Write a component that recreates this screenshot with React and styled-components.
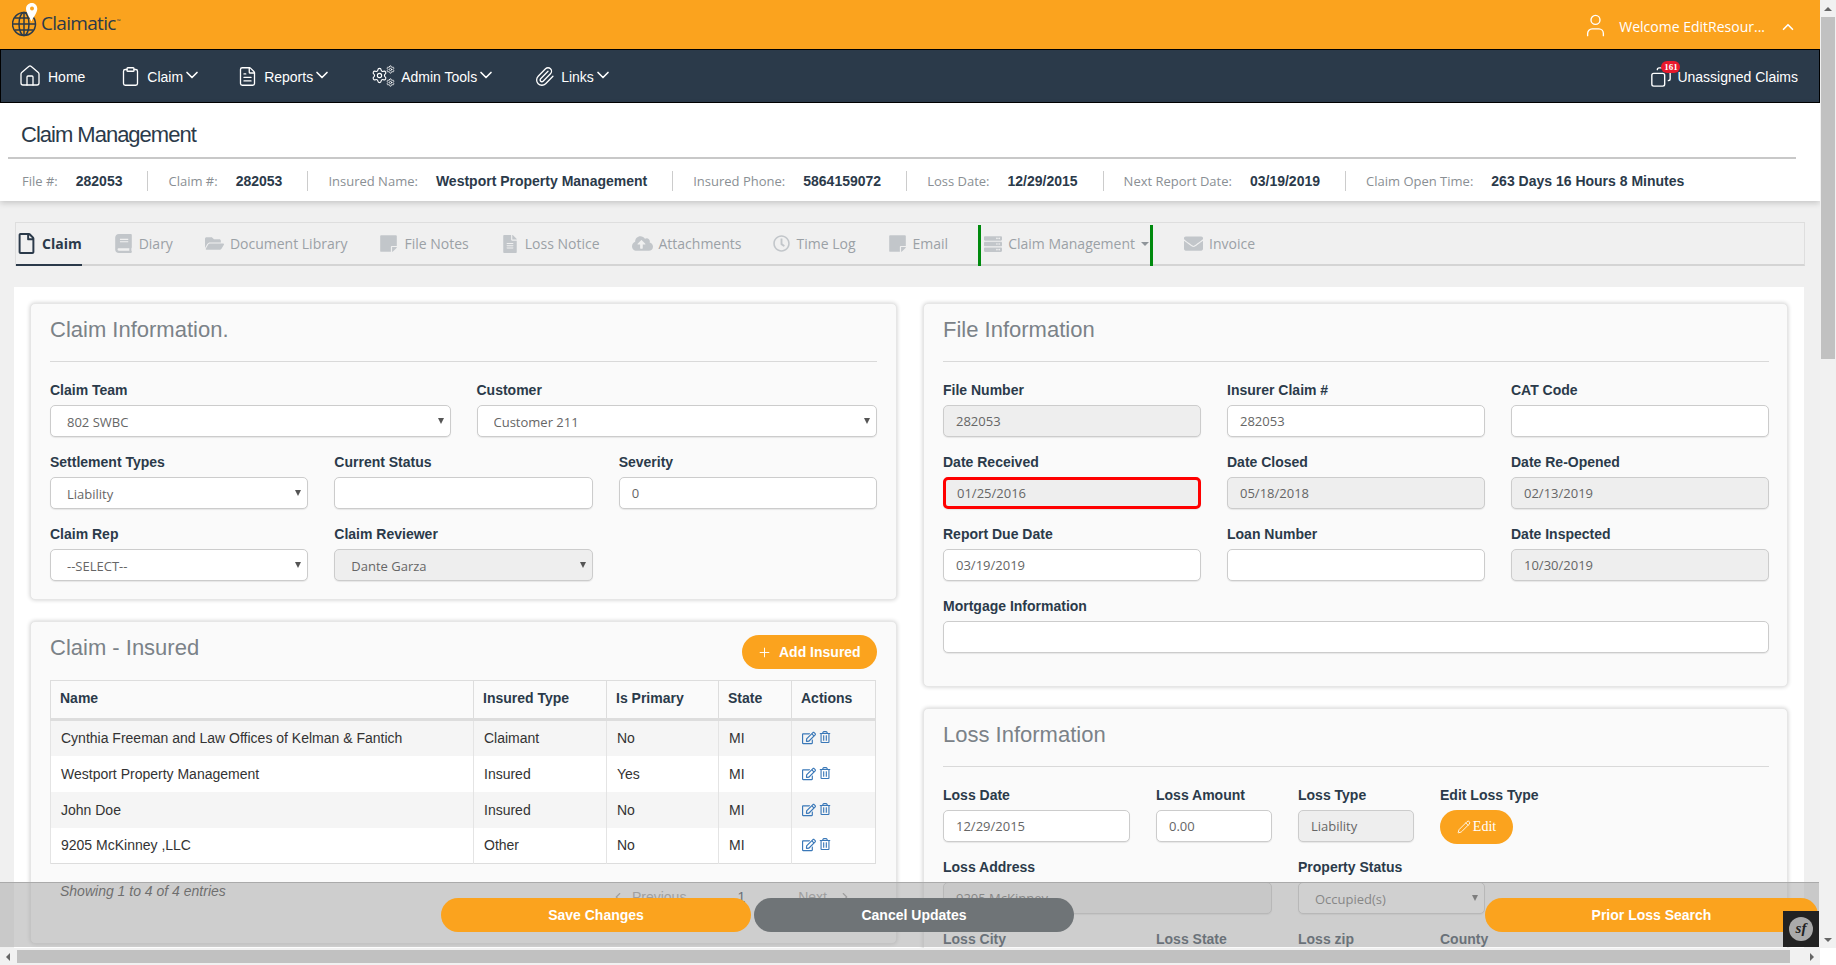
import React from "react";
import styled, { createGlobalStyle } from "styled-components";
import {
  Home,
  Clipboard,
  FileText,
  Settings,
  Paperclip,
  ChevronDown,
  ChevronUp,
  ChevronLeft,
  ChevronRight,
  User,
  Copy,
  Plus,
  Pencil,
} from "lucide-react";
import {
  FaRegFile,
  FaBook,
  FaFolderOpen,
  FaStickyNote,
  FaFileAlt,
  FaCloudUploadAlt,
  FaRegClock,
  FaServer,
  FaEnvelope,
  FaRegEdit,
  FaRegTrashAlt,
} from "react-icons/fa";

const arial = `"Liberation Sans", Arial, sans-serif`;
const open = `"Open Sans", Arial, sans-serif`;
const orange = "#fba31e";
const navy = "#2b3a4a";

const Global = createGlobalStyle`
  html, body { margin: 0; padding: 0; height: 100%; overflow: hidden; background: #fff; }
  * { box-sizing: border-box; }
`;
const Shell = styled.div`
  display: grid;
  grid-template-columns: 1820px 16px;
  grid-template-rows: 948px 17px;
  width: 1836px;
  height: 965px;
  position: relative;
  overflow: hidden;
  font-family: ${arial};
`;
const Viewport = styled.div`
  overflow: hidden;
  background: #f0f0f0;
`;
const TopBar = styled.header`
  height: 49px;
  background: ${orange};
  display: flex;
  align-items: center;
  justify-content: space-between;
  padding: 0 23px 0 12px;
`;
const Logo = styled.div`
  display: flex;
  align-items: center;
  gap: 3px;
  margin-top: -3px;
  font-family: ${open};
  font-size: 19px;
  letter-spacing: -0.7px;
  color: ${navy};
  svg {
    margin-top: -6px;
  }
  sup {
    font-size: 5px;
    margin-left: 1px;
  }
`;
const Welcome = styled.div`
  display: flex;
  align-items: center;
  padding-top: 4px;
  color: #fff;
  font-family: ${open};
  font-size: 14px;
`;
const UserIcon = styled(User)`
  margin: -3px 10px 0 0;
`;
const UpIcon = styled(ChevronUp)`
  margin-left: 14px;
`;
const NavBar = styled.nav`
  height: 54px;
  background: ${navy};
  border: 1px solid #000;
  display: flex;
  align-items: center;
  justify-content: space-between;
  padding: 0 21px 0 17px;
  color: #fff;
`;
const NavList = styled.div`
  display: flex;
  align-items: center;
  gap: 35px;
`;
const NavItem = styled.a`
  display: flex;
  align-items: center;
  font-size: 14px;
  color: #fff;
  gap: 6px;
  svg {
    flex: none;
  }
  span {
    margin-top: 1px;
  }
`;
const Chevron = styled(ChevronDown)`
  margin: -3px 0 0 -7px;
`;
const AdminSvg = styled.svg`
  margin-left: 4px;
`;
const LinksIcon = styled(Paperclip)`
  margin-left: 3px;
`;
const Unassigned = styled.a`
  display: flex;
  align-items: center;
  font-size: 14px;
  color: #fff;
  position: relative;
  gap: 5px;
  padding-top: 1px;
`;
const CopyIcon = styled(Copy)`
  transform: scaleX(-1);
`;
const Badge = styled.b`
  position: absolute;
  left: 11px;
  top: -4px;
  width: 19px;
  height: 12px;
  border-radius: 6px;
  background: #e8192c;
  color: #fff;
  font-size: 9px;
  line-height: 12px;
  text-align: center;
  font-family: "Liberation Serif", serif;
`;
const PageHead = styled.section`
  background: #fff;
  height: 98px;
  box-shadow: 0 2px 6px rgba(0, 0, 0, 0.18);
  padding: 0 24px 0 8px;
  position: relative;
`;
const PageTitle = styled.h1`
  margin: 0;
  height: 56px;
  border-bottom: 2px solid #c8c8c8;
  font-size: 22px;
  font-weight: 400;
  color: ${navy};
  letter-spacing: -1px;
  line-height: 24px;
  padding: 20px 0 0 13px;
`;
const InfoRow = styled.div`
  display: flex;
  align-items: center;
  height: 42px;
  padding: 1px 0 0 14px;
`;
const InfoItem = styled.div`
  display: flex;
  align-items: center;
  gap: 18px;
  height: 20px;
  padding-right: 25px;
  margin-right: 20px;
  border-right: 1px solid #ccc;
  &:last-child {
    border: 0;
  }
`;
const InfoLabel = styled.span`
  font-family: ${open};
  font-size: 13px;
  color: #8a8f94;
`;
const InfoValue = styled.b`
  font-size: 14px;
  color: ${navy};
  white-space: nowrap;
`;
const TabStrip = styled.div`
  margin: 21px 0 0 15px;
  width: 1790px;
  height: 44px;
  border: 1px solid #dedede;
  border-bottom: 2px solid #d4d4d4;
  display: flex;
  align-items: stretch;
  gap: 32px;
  font-family: ${open};
  font-size: 14px;
`;
const Tab = styled.a`
  display: flex;
  align-items: center;
  gap: ${(p) => (p.$active ? 5 : 6)}px;
  color: ${(p) => (p.$active ? navy : "#9ba1a6")};
  font-weight: ${(p) => (p.$active ? 700 : 400)};
  margin-bottom: -2px;
  border-bottom: 2px solid ${(p) => (p.$active ? navy : "transparent")};
  svg {
    color: ${(p) => (p.$active ? navy : "#c2c6ca")};
    flex: none;
  }
`;
const GreenTab = styled(Tab)`
  margin: 2px -1px -2px -2px;
  padding: 0 1px 4px 3px;
  border-left: 3px solid #008a0e;
  border-right: 3px solid #008a0e;
  border-bottom: 0;
  i {
    width: 0;
    height: 0;
    border: 4px solid transparent;
    border-top-color: #8f959a;
    margin: 4px 0 0 0;
  }
`;
const Panel = styled.main`
  margin: 21px 0 0 14px;
  width: 1790px;
  background: #fff;
  padding: 16px 0 0 16px;
  display: grid;
  grid-template-columns: 867px 865px;
  column-gap: 26px;
  align-items: start;
`;
const Column = styled.div`
  display: flex;
  flex-direction: column;
  gap: 21px;
`;
const Card = styled.section`
  background: #fafafa;
  border: 1px solid #e6e6e6;
  border-radius: 5px;
  box-shadow: 0 0 4px rgba(0, 0, 0, 0.2);
  padding: 13px ${(p) => p.$right || 19}px ${(p) => p.$bottom || 18}px 19px;
  min-height: ${(p) => p.$minHeight || 0}px;
`;
const CardTitle = styled.h2`
  margin: 0;
  font-size: 22px;
  line-height: 26px;
  font-weight: 400;
  color: #7b8288;
`;
const Rule = styled.hr`
  margin: 18px 0 19px;
  border: 0;
  border-top: 1px solid #d9d9d9;
`;
const FormRow = styled.div`
  display: grid;
  grid-template-columns: ${(p) => p.$cols};
  column-gap: 26px;
  margin-bottom: 16px;
  &:last-child {
    margin-bottom: 0;
  }
`;
const Field = styled.div`
  min-width: 0;
`;
const Label = styled.label`
  display: block;
  font-size: 14px;
  line-height: 18px;
  font-weight: 700;
  color: ${navy};
  margin-bottom: 6px;
  white-space: nowrap;
`;
const Input = styled.input`
  display: block;
  width: 100%;
  height: 32px;
  padding: 0 ${(p) => (p.$error ? 11 : 12)}px;
  border: ${(p) => (p.$error ? "3px solid #f00" : "1px solid #ccc")};
  border-radius: 5px;
  font-family: ${open};
  font-size: 13px;
  color: #666;
  background: ${(p) => (p.readOnly ? "#eee" : "#fff")};
  box-shadow: 0 1px 1px rgba(0, 0, 0, 0.08);
  outline: 0;
`;
const SelectWrap = styled.div`
  position: relative;
  &::after {
    content: "";
    position: absolute;
    right: 7px;
    top: 13px;
    border-style: solid;
    border-width: 6px 3px 0;
    border-color: #555 transparent transparent;
  }
`;
const SelectBox = styled.select`
  display: block;
  width: 100%;
  height: 32px;
  padding: 2px 12px 0 16px;
  appearance: none;
  border: 1px solid #ccc;
  border-radius: 5px;
  font-family: ${open};
  font-size: 13px;
  color: #666;
  opacity: 1;
  background: ${(p) => (p.disabled ? "#eee" : "#fff")};
  box-shadow: 0 1px 1px rgba(0, 0, 0, 0.08);
`;
const InsuredHead = styled.div`
  display: flex;
  justify-content: space-between;
  align-items: flex-start;
  margin: 0 0 11px;
`;
const AddButton = styled.button`
  display: flex;
  align-items: center;
  gap: 7px;
  height: 34px;
  width: 135px;
  border: 0;
  border-radius: 17px;
  background: ${orange};
  color: #fff;
  font-family: ${arial};
  font-size: 14px;
  font-weight: 700;
  padding: 0 0 0 15px;
`;
const EditButton = styled.button`
  display: flex;
  align-items: center;
  justify-content: center;
  gap: 2px;
  width: 73px;
  height: 34px;
  margin-bottom: -2px;
  border: 0;
  border-radius: 17px;
  background: ${orange};
  color: #fff;
  font-family: "Liberation Serif", serif;
  font-size: 14px;
`;
const Table = styled.table`
  border-collapse: collapse;
  table-layout: fixed;
  width: 825px;
  font-size: 14px;
  color: #333;
  border: 1px solid #ddd;
  background: #fff;
`;
const Th = styled.th`
  height: 39px;
  padding: 0 9px 4px;
  text-align: left;
  color: ${navy};
  background: #fafafa;
  border-left: 1px solid #ddd;
  border-bottom: 3px solid #ddd;
  width: ${(p) => p.$width}px;
`;
const Row = styled.tr`
  height: 36px;
  background: ${(p) => (p.$odd ? "#f5f5f5" : "#fff")};
`;
const Td = styled.td`
  padding: 0 10px;
  border-left: 1px solid #e4e4e4;
`;
const Actions = styled.div`
  display: flex;
  gap: 3px;
  color: #3a78b8;
`;
const TableFoot = styled.div`
  display: flex;
  justify-content: space-between;
  padding: 19px 25px 0 10px;
  font-size: 14px;
`;
const Showing = styled.i`
  color: #333;
`;
const Pager = styled.div`
  display: flex;
  align-items: center;
  margin-top: 6px;
  color: #999;
  font-size: 14px;
  gap: 7px;
  b {
    font-weight: 400;
    color: ${navy};
    margin: 0 46px 0 44px;
  }
  span:last-of-type {
    margin-right: 4px;
  }
`;
const ActionBar = styled.footer`
  position: absolute;
  left: 0;
  top: 882px;
  width: 1819px;
  height: 65px;
  background: rgba(165, 165, 165, 0.52);
  border-top: 1px solid #aaa;
  display: flex;
  align-items: center;
  padding: 0 1px 0 441px;
`;
const BarButton = styled.button`
  height: 34px;
  width: ${(p) => p.$width}px;
  margin-left: ${(p) => p.$left || 0}px;
  border: 0;
  border-radius: 17px;
  background: ${(p) => (p.$grey ? "#6f7477" : orange)};
  color: #fff;
  font-family: ${arial};
  font-size: 14px;
  font-weight: 700;
`;
const SfBadge = styled.div`
  position: absolute;
  right: 0;
  bottom: 0;
  width: 36px;
  height: 36px;
  background: #222;
  display: flex;
  align-items: center;
  justify-content: center;
  span {
    width: 24px;
    height: 24px;
    border-radius: 50%;
    background: #aaa;
    color: #222;
    font: italic 700 15px/23px "Liberation Serif", serif;
    text-align: center;
  }
`;
const VScroll = styled.div`
  background: #f1f1f1;
  display: flex;
  flex-direction: column;
  justify-content: space-between;
  position: relative;
`;
const HScroll = styled.div`
  background: #f1f1f1;
  display: flex;
  align-items: center;
  justify-content: space-between;
`;
const Corner = styled.div`
  background: #fff;
`;
const VThumb = styled.div`
  position: absolute;
  top: 17px;
  left: 1px;
  width: 14px;
  height: 342px;
  background: #c1c1c1;
`;
const HThumb = styled.div`
  width: 1773px;
  height: 13px;
  background: #c1c1c1;
  margin-right: 13px;
`;
const Arrow = styled.span`
  display: flex;
  width: 16px;
  height: 17px;
  align-items: center;
  justify-content: center;
  i {
    width: 0;
    height: 0;
    border: 4px solid transparent;
    ${(p) => `border-${p.$side}-color: #666;`}
    margin-${(p) => p.$side}: 4px;
  }
`;

function Globe() {
  return (
    <svg width="26" height="34" viewBox="0 0 26 34" fill="none">
      <g stroke={navy} strokeWidth="1.5">
        <circle cx="12" cy="21" r="11.500" />
        <ellipse cx="12" cy="21" rx="5" ry="11.500" />
        <path d="M12 10v23M1 21h22M3 15h18M3 27h18" />
      </g>
      <path
        d="M20 0c-3.500 0-6 2.700-6 5.800 0 3.800 4.300 9.500 5.300 12.700 1.400-3.300 6-8.500 6-12.700C25.300 2.700 23 0 20 0z"
        fill="#fff"
      />
      <circle cx="20" cy="5.500" r="2" fill={orange} />
    </svg>
  );
}

function AdminIcon() {
  return (
    <AdminSvg width="24" height="24" viewBox="0 0 24 24">
      <Settings x="0" y="3" width="17" height="17" color="#fff" strokeWidth={1.6} />
      <Settings x="15" y="1" width="9" height="9" color="#fff" strokeWidth={2.2} />
      <Settings x="15" y="14" width="9" height="9" color="#fff" strokeWidth={2.2} />
    </AdminSvg>
  );
}

function Select({ value, disabled }) {
  return (
    <SelectWrap>
      <SelectBox defaultValue={value} disabled={disabled}>
        <option>{value}</option>
      </SelectBox>
    </SelectWrap>
  );
}

function TextField({ label, value, readOnly, error }) {
  return (
    <Field>
      <Label>{label}</Label>
      <Input defaultValue={value} readOnly={readOnly} $error={error} />
    </Field>
  );
}

function SelectField({ label, value, disabled }) {
  return (
    <Field>
      <Label>{label}</Label>
      <Select value={value} disabled={disabled} />
    </Field>
  );
}

const info = [
  ["File #:", "282053"],
  ["Claim #:", "282053"],
  ["Insured Name:", "Westport Property Management"],
  ["Insured Phone:", "5864159072"],
  ["Loss Date:", "12/29/2015"],
  ["Next Report Date:", "03/19/2019"],
  ["Claim Open Time:", "263 Days 16 Hours 8 Minutes"],
];

const insured = [
  ["Cynthia Freeman and Law Offices of Kelman & Fantich", "Claimant", "No"],
  ["Westport Property Management", "Insured", "Yes"],
  ["John Doe", "Insured", "No"],
  ["9205 McKinney ,LLC", "Other", "No"],
];

export default function App() {
  return (
    <Shell>
      <Global />
      <Viewport>
        <TopBar>
          <Logo>
            <Globe />
            <span>
              Claimatic<sup>™</sup>
            </span>
          </Logo>
          <Welcome>
            <UserIcon size={27} strokeWidth={1.2} />
            Welcome EditResour...
            <UpIcon size={18} strokeWidth={2.2} />
          </Welcome>
        </TopBar>
        <NavBar>
          <NavList>
            <NavItem>
              <Home size={24} strokeWidth={1.3} />
              <span>Home</span>
            </NavItem>
            <NavItem>
              <Clipboard size={21} strokeWidth={1.5} />
              <span>Claim</span>
              <Chevron size={20} strokeWidth={2} />
            </NavItem>
            <NavItem>
              <FileText size={21} strokeWidth={1.5} />
              <span>Reports</span>
              <Chevron size={20} strokeWidth={2} />
            </NavItem>
            <NavItem>
              <AdminIcon />
              <span>Admin Tools</span>
              <Chevron size={20} strokeWidth={2} />
            </NavItem>
            <NavItem>
              <LinksIcon size={21} strokeWidth={1.5} />
              <span>Links</span>
              <Chevron size={20} strokeWidth={2} />
            </NavItem>
          </NavList>
          <Unassigned>
            <CopyIcon size={22} strokeWidth={1.5} />
            <Badge>161</Badge>
            Unassigned Claims
          </Unassigned>
        </NavBar>
        <PageHead>
          <PageTitle>Claim Management</PageTitle>
          <InfoRow>
            {info.map(([label, value]) => (
              <InfoItem key={label}>
                <InfoLabel>{label}</InfoLabel>
                <InfoValue>{value}</InfoValue>
              </InfoItem>
            ))}
          </InfoRow>
        </PageHead>
        <TabStrip>
          <Tab $active>
            <FaRegFile size={21} />
            Claim
          </Tab>
          <Tab>
            <FaBook size={19} />
            Diary
          </Tab>
          <Tab>
            <FaFolderOpen size={19} />
            Document Library
          </Tab>
          <Tab>
            <FaStickyNote size={19} />
            File Notes
          </Tab>
          <Tab>
            <FaFileAlt size={18} />
            Loss Notice
          </Tab>
          <Tab>
            <FaCloudUploadAlt size={21} />
            Attachments
          </Tab>
          <Tab>
            <FaRegClock size={17} />
            Time Log
          </Tab>
          <Tab>
            <FaStickyNote size={19} />
            Email
          </Tab>
          <GreenTab>
            <FaServer size={18} />
            Claim Management
            <i />
          </GreenTab>
          <Tab>
            <FaEnvelope size={19} />
            Invoice
          </Tab>
        </TabStrip>
        <Panel>
          <Column>
            <Card>
              <CardTitle>Claim Information.</CardTitle>
              <Rule />
              <FormRow $cols="1fr 1fr">
                <SelectField label="Claim Team" value="802 SWBC" />
                <SelectField label="Customer" value="Customer 211" />
              </FormRow>
              <FormRow $cols="1fr 1fr 1fr">
                <SelectField label="Settlement Types" value="Liability" />
                <TextField label="Current Status" value="" />
                <TextField label="Severity" value="0" />
              </FormRow>
              <FormRow $cols="1fr 1fr 1fr">
                <SelectField label="Claim Rep" value="--SELECT--" />
                <SelectField label="Claim Reviewer" value="Dante Garza" disabled />
              </FormRow>
            </Card>
            <Card $minHeight={323}>
              <InsuredHead>
                <CardTitle>Claim - Insured</CardTitle>
                <AddButton>
                  <Plus size={15} strokeWidth={1.5} />
                  Add Insured
                </AddButton>
              </InsuredHead>
              <Table>
                <thead>
                  <tr>
                    <Th $width={423}>Name</Th>
                    <Th $width={133}>Insured Type</Th>
                    <Th $width={112}>Is Primary</Th>
                    <Th $width={73}>State</Th>
                    <Th $width={84}>Actions</Th>
                  </tr>
                </thead>
                <tbody>
                  {insured.map(([name, type, primary], i) => (
                    <Row key={name} $odd={i % 2 === 0}>
                      <Td>{name}</Td>
                      <Td>{type}</Td>
                      <Td>{primary}</Td>
                      <Td>MI</Td>
                      <Td>
                        <Actions>
                          <FaRegEdit size={14} />
                          <FaRegTrashAlt size={12} />
                        </Actions>
                      </Td>
                    </Row>
                  ))}
                </tbody>
              </Table>
              <TableFoot>
                <Showing>Showing 1 to 4 of 4 entries</Showing>
                <Pager>
                  <ChevronLeft size={14} />
                  <span>Previous</span>
                  <b>1</b>
                  <span>Next</span>
                  <ChevronRight size={14} />
                </Pager>
              </TableFoot>
            </Card>
          </Column>
          <Column>
            <Card $bottom={33} $right={18}>
              <CardTitle>File Information</CardTitle>
              <Rule />
              <FormRow $cols="1fr 1fr 1fr">
                <TextField label="File Number" value="282053" readOnly />
                <TextField label="Insurer Claim #" value="282053" />
                <TextField label="CAT Code" value="" />
              </FormRow>
              <FormRow $cols="1fr 1fr 1fr">
                <TextField label="Date Received" value="01/25/2016" readOnly error />
                <TextField label="Date Closed" value="05/18/2018" readOnly />
                <TextField label="Date Re-Opened" value="02/13/2019" readOnly />
              </FormRow>
              <FormRow $cols="1fr 1fr 1fr">
                <TextField label="Report Due Date" value="03/19/2019" />
                <TextField label="Loan Number" value="" />
                <TextField label="Date Inspected" value="10/30/2019" readOnly />
              </FormRow>
              <FormRow $cols="1fr">
                <TextField label="Mortgage Information" value="" />
              </FormRow>
            </Card>
            <Card $right={18}>
              <CardTitle>Loss Information</CardTitle>
              <Rule />
              <FormRow $cols="187px 116px 116px 73px">
                <TextField label="Loss Date" value="12/29/2015" />
                <TextField label="Loss Amount" value="0.00" />
                <TextField label="Loss Type" value="Liability" readOnly />
                <Field>
                  <Label>Edit Loss Type</Label>
                  <EditButton>
                    <Pencil size={14} strokeWidth={1.5} />
                    Edit
                  </EditButton>
                </Field>
              </FormRow>
              <FormRow $cols="329px 187px">
                <TextField label="Loss Address" value="9205 McKinney" readOnly />
                <SelectField label="Property Status" value="Occupied(s)" />
              </FormRow>
              <FormRow $cols="187px 116px 116px 116px">
                <TextField label="Loss City" value="" />
                <TextField label="Loss State" value="" />
                <TextField label="Loss zip" value="" />
                <TextField label="County" value="" />
              </FormRow>
            </Card>
          </Column>
        </Panel>
      </Viewport>
      <VScroll>
        <Arrow $side="bottom">
          <i />
        </Arrow>
        <VThumb />
        <Arrow $side="top">
          <i />
        </Arrow>
      </VScroll>
      <HScroll>
        <Arrow $side="right">
          <i />
        </Arrow>
        <HThumb />
        <Arrow $side="left">
          <i />
        </Arrow>
      </HScroll>
      <Corner />
      <ActionBar>
        <BarButton $width={310}>Save Changes</BarButton>
        <BarButton $width={320} $left={3} $grey>
          Cancel Updates
        </BarButton>
        <BarButton $width={333} $left={411}>
          Prior Loss Search
        </BarButton>
        <SfBadge>
          <span>sf</span>
        </SfBadge>
      </ActionBar>
    </Shell>
  );
}
